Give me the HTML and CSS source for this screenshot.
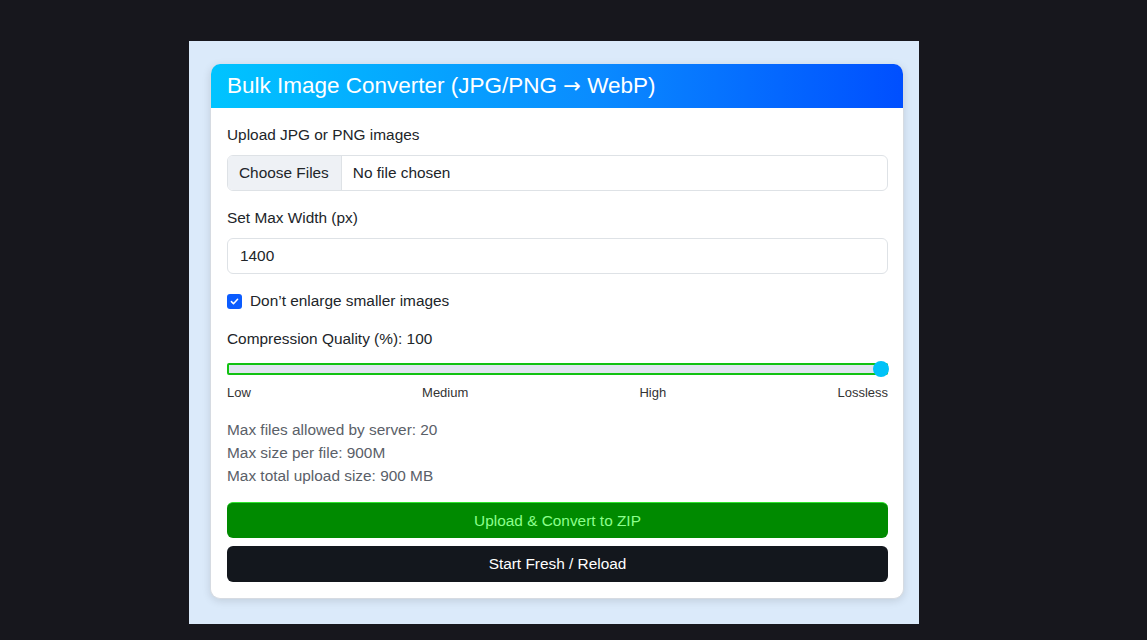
FILE: index.html
```html
<!DOCTYPE html>
<html lang="en">
<head>
<meta charset="utf-8">
<title>Bulk Image Converter</title>
<link rel="stylesheet" href="styles.css">
</head>
<body>
<div class="panel">
  <div class="card">
    <div class="card-header">Bulk Image Converter (JPG/PNG <span class="arrow">→</span> WebP)</div>
    <div class="card-body">
      <div class="label">Upload JPG or PNG images</div>
      <div class="file-control">
        <span class="file-btn">Choose Files</span>
        <span class="file-name">No file chosen</span>
      </div>

      <div class="label mt">Set Max Width (px)</div>
      <div class="text-control">1400</div>

      <div class="check-row mt">
        <span class="checkbox">
          <svg viewBox="0 0 16 16" width="11" height="11"><path d="M3.5 8.2l3 3 6-6.4" fill="none" stroke="#fff" stroke-width="2.2" stroke-linecap="round" stroke-linejoin="round"/></svg>
        </span>
        <span>Don’t enlarge smaller images</span>
      </div>

      <div class="label mt">Compression Quality (%): 100</div>
      <div class="range">
        <div class="track"></div>
        <div class="thumb"></div>
      </div>
      <div class="scale">
        <span>Low</span><span>Medium</span><span>High</span><span>Lossless</span>
      </div>

      <div class="info">
        <div>Max files allowed by server: 20</div>
        <div>Max size per file: 900M</div>
        <div>Max total upload size: 900 MB</div>
      </div>

      <div class="btn btn-green">Upload &amp; Convert to ZIP</div>
      <div class="btn btn-dark">Start Fresh / Reload</div>
    </div>
  </div>
</div>
</body>
</html>
```
FILE: styles.css
```css
* { box-sizing: border-box; }
html, body { margin: 0; padding: 0; }
body {
  background: #17171d;
  font-family: "Liberation Sans", Arial, sans-serif;
  font-size: 15.4px;
  color: #212529;
  height: 640px;
  overflow: hidden;
}
.panel {
  margin-left: 189px;
  margin-top: 41px;
  width: 730px;
  height: 583px;
  background: #dbeafa;
  padding: 23px 15px 25px 21px;
}
.card {
  width: 694px;
  background: #fff;
  border: 1px solid #d6dbe2;
  border-top: 0;
  border-radius: 10px;
  overflow: hidden;
  box-shadow: 0 2px 8px rgba(0, 0, 0, 0.12);
}
.card-header {
  height: 44px;
  background: linear-gradient(90deg, #00c4ff 0%, #0a8cff 55%, #004fff 100%);
  color: #fff;
  font-size: 22.5px;
  line-height: 44px;
  padding-left: 16px;
}
.arrow {
  font-family: "DejaVu Sans", sans-serif;
  font-size: 21px;
}
.card-body {
  padding: 16px 15px 16px 16px;
}
.label {
  line-height: 22px;
  margin-bottom: 9px;
}
.mt { margin-top: 16px; }
.file-control {
  display: flex;
  height: 36px;
  border: 1px solid #dee2e6;
  border-radius: 6px;
  overflow: hidden;
}
.file-btn {
  background: #eef1f5;
  border-right: 1px solid #dee2e6;
  padding: 0 12px 0 11px;
  line-height: 34px;
}
.file-name {
  padding-left: 11px;
  line-height: 34px;
}
.text-control {
  height: 36px;
  border: 1px solid #dee2e6;
  border-radius: 6px;
  padding-left: 12px;
  line-height: 34px;
}
.check-row {
  display: flex;
  align-items: center;
  gap: 8px;
  line-height: 22px;
}
.checkbox {
  width: 15px;
  height: 15px;
  border-radius: 3px;
  background: #0b5cff;
  display: flex;
  align-items: center;
  justify-content: center;
}
.range {
  position: relative;
  height: 16px;
  margin-top: 11px;
}
.track {
  position: absolute;
  left: 0;
  right: 0;
  top: 2px;
  height: 12px;
  border: 2px solid #12c212;
  border-radius: 2px;
  background: #dfe4ef;
}
.thumb {
  position: absolute;
  right: -1px;
  top: 0;
  width: 16px;
  height: 16px;
  border-radius: 50%;
  background: #00c2f8;
}
.scale {
  display: flex;
  justify-content: space-between;
  font-size: 13px;
  line-height: 16px;
  margin-top: 8px;
  color: #333;
}
.info {
  margin-top: 17px;
  line-height: 23px;
  color: #5a6068;
}
.btn {
  height: 36px;
  border-radius: 6px;
  text-align: center;
  line-height: 36px;
}
.btn-green {
  margin-top: 15px;
  background: #008a00;
  color: #8cff8c;
  border-top: 1px solid #2ee62e;
  line-height: 35px;
}
.btn-dark {
  margin-top: 8px;
  background: #13171d;
  color: #fff;
}
```
